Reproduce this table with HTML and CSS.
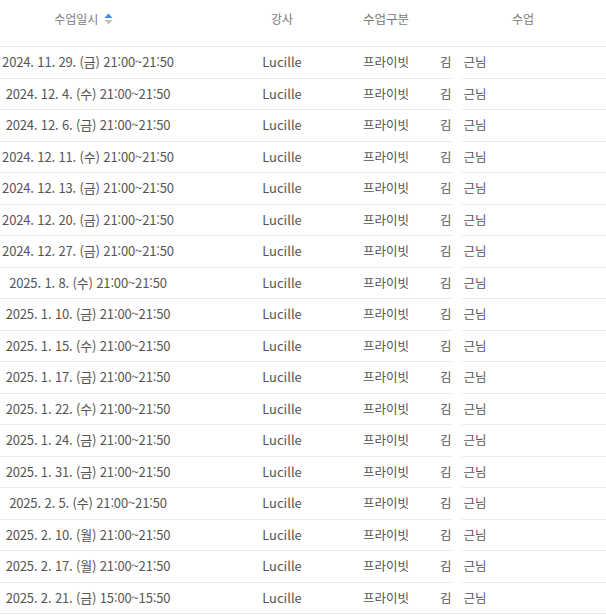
FILE: index.html
```html
<!DOCTYPE html>
<html lang="ko">
<head>
<meta charset="utf-8">
<link rel="stylesheet" href="styles.css">
</head>
<body>
<div class="table">
  <div class="row head">
    <div class="c1">수업일시 <span class="sort"><svg width="9" height="12" viewBox="0 0 9 12"><path d="M4.5 0.5 L8.5 5 L0.5 5 Z" fill="#3b8eea"/><path d="M4.5 11.5 L8.5 7 L0.5 7 Z" fill="#c4c4c4"/></svg></span></div>
    <div class="c2">강사</div>
    <div class="c3">수업구분</div>
    <div class="c4 ch">수업</div>
  </div>
  <div class="row"><div class="c1">2024. 11. 29. (금) 21:00~21:50</div><div class="c2">Lucille</div><div class="c3">프라이빗</div><div class="c4">김<span class="gap"></span>근님</div></div>
  <div class="row"><div class="c1">2024. 12. 4. (수) 21:00~21:50</div><div class="c2">Lucille</div><div class="c3">프라이빗</div><div class="c4">김<span class="gap"></span>근님</div></div>
  <div class="row"><div class="c1">2024. 12. 6. (금) 21:00~21:50</div><div class="c2">Lucille</div><div class="c3">프라이빗</div><div class="c4">김<span class="gap"></span>근님</div></div>
  <div class="row"><div class="c1">2024. 12. 11. (수) 21:00~21:50</div><div class="c2">Lucille</div><div class="c3">프라이빗</div><div class="c4">김<span class="gap"></span>근님</div></div>
  <div class="row"><div class="c1">2024. 12. 13. (금) 21:00~21:50</div><div class="c2">Lucille</div><div class="c3">프라이빗</div><div class="c4">김<span class="gap"></span>근님</div></div>
  <div class="row"><div class="c1">2024. 12. 20. (금) 21:00~21:50</div><div class="c2">Lucille</div><div class="c3">프라이빗</div><div class="c4">김<span class="gap"></span>근님</div></div>
  <div class="row"><div class="c1">2024. 12. 27. (금) 21:00~21:50</div><div class="c2">Lucille</div><div class="c3">프라이빗</div><div class="c4">김<span class="gap"></span>근님</div></div>
  <div class="row"><div class="c1">2025. 1. 8. (수) 21:00~21:50</div><div class="c2">Lucille</div><div class="c3">프라이빗</div><div class="c4">김<span class="gap"></span>근님</div></div>
  <div class="row"><div class="c1">2025. 1. 10. (금) 21:00~21:50</div><div class="c2">Lucille</div><div class="c3">프라이빗</div><div class="c4">김<span class="gap"></span>근님</div></div>
  <div class="row"><div class="c1">2025. 1. 15. (수) 21:00~21:50</div><div class="c2">Lucille</div><div class="c3">프라이빗</div><div class="c4">김<span class="gap"></span>근님</div></div>
  <div class="row"><div class="c1">2025. 1. 17. (금) 21:00~21:50</div><div class="c2">Lucille</div><div class="c3">프라이빗</div><div class="c4">김<span class="gap"></span>근님</div></div>
  <div class="row"><div class="c1">2025. 1. 22. (수) 21:00~21:50</div><div class="c2">Lucille</div><div class="c3">프라이빗</div><div class="c4">김<span class="gap"></span>근님</div></div>
  <div class="row"><div class="c1">2025. 1. 24. (금) 21:00~21:50</div><div class="c2">Lucille</div><div class="c3">프라이빗</div><div class="c4">김<span class="gap"></span>근님</div></div>
  <div class="row"><div class="c1">2025. 1. 31. (금) 21:00~21:50</div><div class="c2">Lucille</div><div class="c3">프라이빗</div><div class="c4">김<span class="gap"></span>근님</div></div>
  <div class="row"><div class="c1">2025. 2. 5. (수) 21:00~21:50</div><div class="c2">Lucille</div><div class="c3">프라이빗</div><div class="c4">김<span class="gap"></span>근님</div></div>
  <div class="row"><div class="c1">2025. 2. 10. (월) 21:00~21:50</div><div class="c2">Lucille</div><div class="c3">프라이빗</div><div class="c4">김<span class="gap"></span>근님</div></div>
  <div class="row"><div class="c1">2025. 2. 17. (월) 21:00~21:50</div><div class="c2">Lucille</div><div class="c3">프라이빗</div><div class="c4">김<span class="gap"></span>근님</div></div>
  <div class="row"><div class="c1">2025. 2. 21. (금) 15:00~15:50</div><div class="c2">Lucille</div><div class="c3">프라이빗</div><div class="c4">김<span class="gap"></span>근님</div></div>
  <div class="mask"></div>
</div>
</body>
</html>
```
FILE: styles.css
```css
html, body {
  margin: 0;
  padding: 0;
  background: #fff;
}
body {
  font-family: "Noto Sans CJK KR", "Noto Sans", sans-serif;
  font-size: 13px;
  color: #555;
}
.table {
  position: relative;
  width: 606px;
}
.row {
  display: grid;
  grid-template-columns: 232px 100px 108px 166px;
  align-items: center;
  height: 31.5px;
  box-sizing: border-box;
  border-bottom: 1px solid #ececec;
  line-height: 20px;
}
.row.head {
  height: 47px;
  align-items: start;
  padding-top: 9px;
  color: #7a7a7a;
  font-size: 12px;
}
.c1 {
  padding-right: 56px;
  text-align: center;
  white-space: nowrap;
  letter-spacing: -0.15px;
}
.head .c1 {
  letter-spacing: 0;
  padding-right: 65px;
}
.c2, .c3 {
  text-align: center;
  white-space: nowrap;
}
.c3 {
  font-size: 12.5px;
}
.c4 {
  white-space: nowrap;
  font-size: 12.5px;
}
.c4.ch {
  text-align: center;
  font-size: 12px;
}
.sort {
  display: inline-block;
  vertical-align: -1px;
  margin-left: 2px;
}
.sort svg {
  display: block;
}
.gap {
  display: inline-block;
  width: 12px;
}
.mask {
  position: absolute;
  left: 453px;
  top: 47px;
  width: 9px;
  height: 565px;
  background: #fff;
}
```
